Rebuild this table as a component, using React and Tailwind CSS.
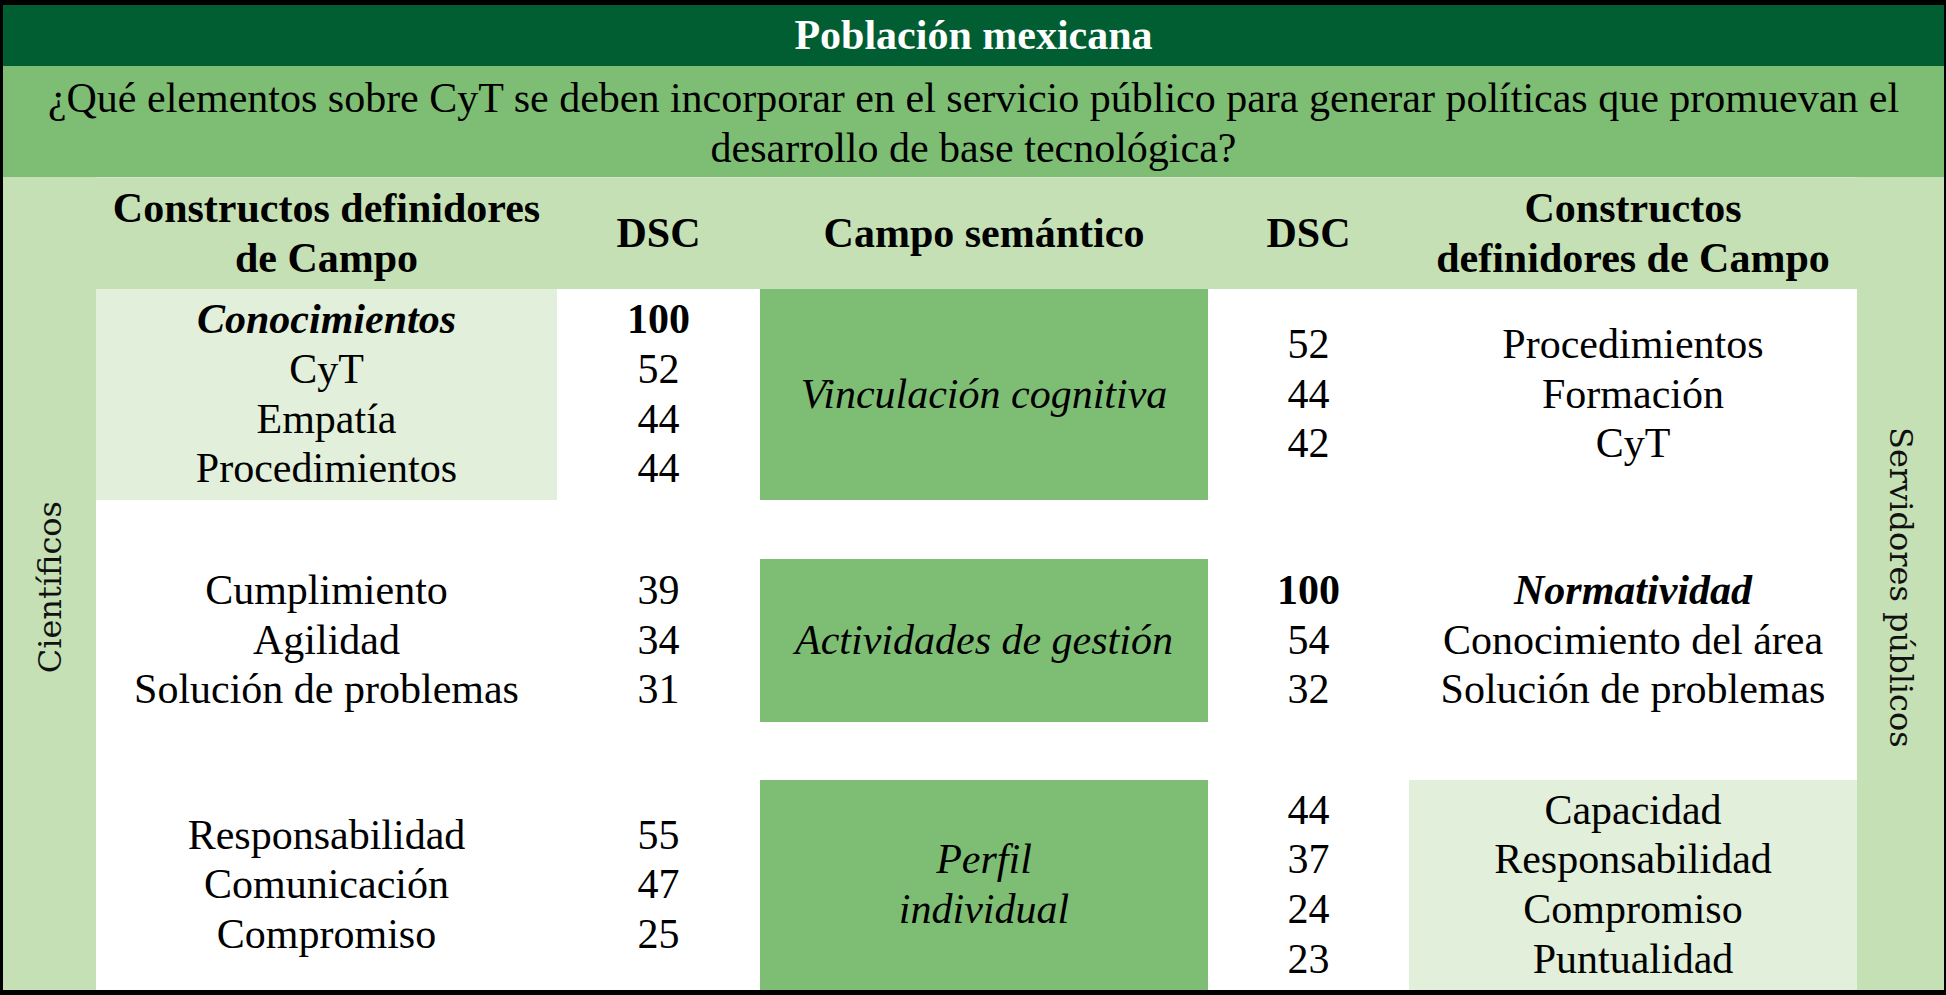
function Cell({ bg = "", children }) {
  return (
    <div className={`flex flex-col items-center justify-center text-center whitespace-nowrap ${bg}`}>
      {children}
    </div>
  );
}

function Row({ h, c1, d1, campo, d2, c5, bg1 = "", bg5 = "" }) {
  return (
    <div className={`grid grid-cols-[461px_203px_448px_201px_448px] ${h}`}>
      <Cell bg={bg1}>{c1}</Cell>
      <Cell>{d1}</Cell>
      <Cell bg="bg-[#7EBE74] italic">{campo}</Cell>
      <Cell>{d2}</Cell>
      <Cell bg={bg5}>{c5}</Cell>
    </div>
  );
}

const lines = (arr) => arr.map((t, i) => <div key={i}>{t}</div>);

export default function App() {
  return (
    <div className="w-[1946px] h-[995px] bg-black pt-[5px] pb-[5px] pl-[3px] pr-[2px] flex flex-col [font-family:'Liberation_Serif','Times_New_Roman',serif] text-[42px] leading-[49.6px] text-black">
      <div className="h-[61px] shrink-0 bg-[#005E32] flex items-center justify-center text-white font-bold">
        Población mexicana
      </div>
      <div className="h-[111px] shrink-0 bg-[#7EBE74] flex flex-col items-center justify-center text-center whitespace-nowrap pt-[4px]">
        <div>¿Qué elementos sobre CyT se deben incorporar en el servicio público para generar políticas que promuevan el</div>
        <div>desarrollo de base tecnológica?</div>
      </div>
      <div className="flex flex-1 min-h-0">
        <div className="w-[93px] shrink-0 bg-[#C5E0B4] flex items-center justify-center pt-[8px]">
          <span className="[writing-mode:vertical-rl] rotate-180 [font-family:'DejaVu_Serif',serif] text-[32px] leading-none text-[#111]">
            Científicos
          </span>
        </div>
        <div className="w-[1761px] shrink-0 flex flex-col bg-white">
          <div className="h-[112px] shrink-0 grid grid-cols-[461px_203px_448px_201px_448px] bg-[#C5E0B4] font-bold border-t border-[#d3e8c6]">
            <Cell>{lines(["Constructos definidores", "de Campo"])}</Cell>
            <Cell>DSC</Cell>
            <Cell>Campo semántico</Cell>
            <Cell>DSC</Cell>
            <Cell>{lines(["Constructos", "definidores de Campo"])}</Cell>
          </div>
          <Row
            h="h-[211px] shrink-0"
            bg1="bg-[#E2EFDA]"
            c1={[<div key="a" className="font-bold italic">Conocimientos</div>, <div key="b">CyT</div>, <div key="c">Empatía</div>, <div key="d">Procedimientos</div>]}
            d1={[<div key="a" className="font-bold">100</div>, <div key="b">52</div>, <div key="c">44</div>, <div key="d">44</div>]}
            campo="Vinculación cognitiva"
            d2={lines(["52", "44", "42"])}
            c5={lines(["Procedimientos", "Formación", "CyT"])}
          />
          <div className="h-[59px] shrink-0" />
          <Row
            h="h-[163px] shrink-0"
            c1={lines(["Cumplimiento", "Agilidad", "Solución de problemas"])}
            d1={lines(["39", "34", "31"])}
            campo="Actividades de gestión"
            d2={[<div key="a" className="font-bold">100</div>, <div key="b">54</div>, <div key="c">32</div>]}
            c5={[<div key="a" className="font-bold italic">Normatividad</div>, <div key="b">Conocimiento del área</div>, <div key="c">Solución de problemas</div>]}
          />
          <div className="h-[58px] shrink-0" />
          <Row
            h="flex-1"
            bg5="bg-[#E2EFDA]"
            c1={lines(["Responsabilidad", "Comunicación", "Compromiso"])}
            d1={lines(["55", "47", "25"])}
            campo={lines(["Perfil", "individual"])}
            d2={lines(["44", "37", "24", "23"])}
            c5={lines(["Capacidad", "Responsabilidad", "Compromiso", "Puntualidad"])}
          />
        </div>
        <div className="flex-1 bg-[#C5E0B4] flex items-center justify-center pt-[8px]">
          <span className="[writing-mode:vertical-rl] [font-family:'DejaVu_Serif',serif] text-[32px] leading-none text-[#111]">
            Servidores públicos
          </span>
        </div>
      </div>
    </div>
  );
}
